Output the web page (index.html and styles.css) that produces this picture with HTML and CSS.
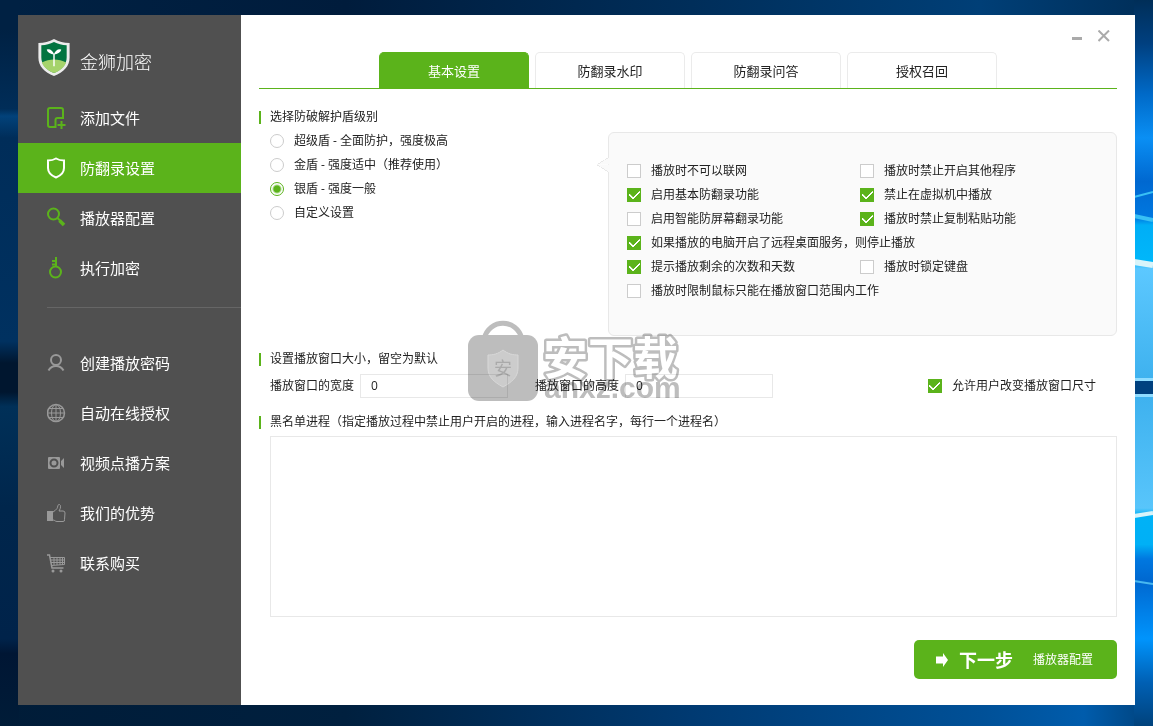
FILE: index.html
```html
<!DOCTYPE html>
<html lang="zh-CN">
<head>
<meta charset="utf-8">
<title>金狮加密</title>
<link rel="stylesheet" href="styles.css">
</head>
<body>
<div class="desktop">
  <svg class="wallpaper" viewBox="0 0 1153 726" preserveAspectRatio="none" aria-hidden="true">
    <defs>
      <linearGradient id="top"><stop offset="0" stop-color="#002143"/><stop offset=".3" stop-color="#001c3c"/><stop offset=".6" stop-color="#002e5a"/><stop offset=".85" stop-color="#003f77"/><stop offset="1" stop-color="#002e58"/></linearGradient>
      <linearGradient id="bottom"><stop offset="0" stop-color="#001c38"/><stop offset=".3" stop-color="#00203f"/><stop offset=".6" stop-color="#003a72"/><stop offset=".85" stop-color="#005097"/><stop offset=".94" stop-color="#005cac"/><stop offset="1" stop-color="#00427c"/></linearGradient>
      <linearGradient id="left" x2="0" y2="1"><stop offset="0" stop-color="#002143"/><stop offset=".04" stop-color="#002143"/><stop offset=".15" stop-color="#002d58"/><stop offset=".16" stop-color="#02427a"/><stop offset=".19" stop-color="#002d59"/><stop offset=".47" stop-color="#003160"/><stop offset=".5" stop-color="#00162f"/><stop offset=".54" stop-color="#00162f"/><stop offset=".56" stop-color="#003058"/><stop offset=".7" stop-color="#00264c"/><stop offset=".88" stop-color="#00234a"/><stop offset=".9" stop-color="#001634"/><stop offset="1" stop-color="#001c38"/></linearGradient>
      <linearGradient id="right" x2="0" y2="1"><stop offset="0" stop-color="#002e58"/><stop offset=".06" stop-color="#004080"/><stop offset=".13" stop-color="#006ac8"/><stop offset=".19" stop-color="#0a8ff4"/><stop offset=".25" stop-color="#0068d0"/><stop offset=".3" stop-color="#0078e0"/><stop offset=".31" stop-color="#00aef6"/><stop offset=".36" stop-color="#00b7fa"/><stop offset=".37" stop-color="#5cc8ff"/><stop offset=".52" stop-color="#3fb2ef"/><stop offset=".55" stop-color="#3fb2ef"/><stop offset=".7" stop-color="#58c5fb"/><stop offset=".71" stop-color="#00b2f6"/><stop offset=".75" stop-color="#00b0f6"/><stop offset=".77" stop-color="#0078e0"/><stop offset=".8" stop-color="#0068d0"/><stop offset=".88" stop-color="#0094fc"/><stop offset=".94" stop-color="#0060b4"/><stop offset="1" stop-color="#00427c"/></linearGradient>
    </defs>
    <rect width="1153" height="16" fill="url(#top)"/>
    <rect y="704" width="1153" height="22" fill="url(#bottom)"/>
    <rect width="19" height="726" fill="url(#left)"/>
    <rect x="1134" width="19" height="726" fill="url(#right)"/>
    <path d="M1134 197L1153 192" stroke="#38c0f5" stroke-width="2"/>
    <path d="M1134 216L1153 220" stroke="#38c0f5" stroke-width="4"/>
    <path d="M1134 262L1153 265" stroke="#d8f4fa" stroke-width="6"/>
    <rect x="1134" y="378" width="19" height="19" fill="#8fdcff"/>
    <rect x="1134" y="381" width="19" height="13" fill="#00417f"/>
    <path d="M1134 516L1153 513" stroke="#d8f4fa" stroke-width="4"/>
    <path d="M1134 581L1153 584" stroke="#48b8f0" stroke-width="2"/>
  </svg>

  <div class="window">
    <aside class="sidebar">
      <header class="brand">
        <svg class="brand-logo" viewBox="0 0 34 40" aria-hidden="true">
          <path d="M17 1C12 4 7 5 1 5V20C1 29 7 35 17 39C27 35 33 29 33 20V5C27 5 22 4 17 1Z" fill="#ececec"/>
          <path d="M17 4C13 6 9 7 4 7.500V20C4 27 9 32.500 17 36C25 32.500 30 27 30 20V7.500C25 7 21 6 17 4Z" fill="#027440"/>
          <path d="M4.500 25C12 21 22 21 29.500 25C27.500 30 23 33.500 17 36C11 33.500 6.500 30 4.500 25Z" fill="#a5d36b"/>
          <path d="M17 29V16" stroke="#fff" stroke-width="1.500"/>
          <path d="M17 17C16 12.500 12 10.500 9.500 12C10.500 15 13.500 16.500 17 17C20.500 16.500 23.500 15 24.500 12C22 10.500 18 12.500 17 17Z" fill="#fff"/>
        </svg>
        <h1 class="brand-name">金狮加密</h1>
      </header>
      <nav class="menu">
        <a class="menu-item" href="#"><svg class="menu-icon accent" viewBox="0 0 20 22"><path d="M7 20H3Q1 20 1 18V3Q1 1 3 1H14Q16 1 16 3V11H10.500Q8.500 11 8.500 13V20H5M14.500 14V22M10.500 18H18.500"/></svg>添加文件</a>
        <a class="menu-item active" href="#" aria-current="page"><svg class="menu-icon" viewBox="0 0 20 22"><path d="M9 1.500C6.500 3 4 3.500 1 3.500V11C1 15.500 4 18.500 9 20.500C14 18.500 17 15.500 17 11V3.500C14 3.500 11.500 3 9 1.500Z"/></svg>防翻录设置</a>
        <a class="menu-item" href="#"><svg class="menu-icon accent" viewBox="0 0 20 22"><circle cx="6.500" cy="7" r="5.500"/><path d="M10.500 11L13 13.500"/><path d="M12.500 13.500L17 18" stroke-width="3.500"/></svg>播放器配置</a>
        <a class="menu-item" href="#"><svg class="menu-icon accent" viewBox="0 0 20 22"><circle cx="8.500" cy="15" r="5.500"/><path d="M9 10V0M9 4H5M9 7.500H5"/></svg>执行加密</a>
      </nav>
      <hr class="divider">
      <nav class="menu">
        <a class="menu-item" href="#"><svg class="menu-icon muted" viewBox="0 0 20 22"><circle cx="9" cy="8" r="5"/><path d="M1.500 18.500C3.500 15 6 14 9 14C12 14 14.500 15 16.500 18.500"/></svg>创建播放密码</a>
        <a class="menu-item" href="#"><svg class="menu-icon muted thin" viewBox="0 0 20 22"><circle cx="9" cy="11" r="8.500" stroke-width="1.500"/><ellipse cx="9" cy="11" rx="4.500" ry="8.500"/><path d="M9 2V20M.500 11H17.500M2 6.500H16M2 15.500H16"/></svg>自动在线授权</a>
        <a class="menu-item" href="#"><svg class="menu-icon muted" viewBox="0 0 20 22"><path d="M2 5H12Q13 5 13 6V16Q13 17 12 17H2Q1 17 1 16V6Q1 5 2 5ZM14 9L17 6V16L14 13Z" fill="#999" stroke="none"/><circle cx="7" cy="11" r="3.500" stroke="#505050"/></svg>视频点播方案</a>
        <a class="menu-item" href="#"><svg class="menu-icon muted thin" viewBox="0 0 20 22"><path d="M0 9H6V19H0Z" fill="#999" stroke="none"/><path d="M6 18C8 18 8 19.500 10 19.500H16Q18 19.500 17.500 17.500L18 11Q18 9 16 9H12C14 6 14 3 12.500 2.500C10.500 2 11 5 10 6.500C9 8 7.500 9 6 10"/></svg>我们的优势</a>
        <a class="menu-item" href="#"><svg class="menu-icon muted thin" viewBox="0 0 20 22"><path d="M0 3H2.500L5 16H16.500" stroke-width="1.500"/><path d="M3 5.500H17.500V12.500L4.500 13.500M3.500 8H17M4 10.500H17M7 5V13M10 5V13M13 5V13M15.500 5V13"/><circle cx="6" cy="19" r="1.500" fill="#999" stroke="none"/><circle cx="14" cy="19" r="1.500" fill="#999" stroke="none"/></svg>联系购买</a>
      </nav>
    </aside>

    <main class="main">
      <div class="titlebar">
        <button class="window-btn" type="button" aria-label="最小化"><svg viewBox="0 0 12 12" width="12" height="12"><path d="M1 8.500H11" stroke="#aaa" stroke-width="3"/></svg></button>
        <button class="window-btn" type="button" aria-label="关闭"><svg viewBox="0 0 12 12" width="12" height="12"><path d="M.500 .500L11 11M11 .500L.500 11" stroke="#aaa" stroke-width="2"/></svg></button>
      </div>
      <div class="tabs" role="tablist">
        <button class="tab selected" type="button" role="tab" aria-selected="true">基本设置</button>
        <button class="tab" type="button" role="tab" aria-selected="false">防翻录水印</button>
        <button class="tab" type="button" role="tab" aria-selected="false">防翻录问答</button>
        <button class="tab" type="button" role="tab" aria-selected="false">授权召回</button>
      </div>

      <form class="form">
        <div class="protection">
          <div class="levels" role="radiogroup" aria-labelledby="level-title">
            <h2 class="section-title" id="level-title">选择防破解护盾级别</h2>
            <label class="choice"><input class="radio" type="radio" name="level">超级盾 - 全面防护，强度极高</label>
            <label class="choice"><input class="radio" type="radio" name="level">金盾 - 强度适中（推荐使用）</label>
            <label class="choice"><input class="radio" type="radio" name="level" checked>银盾 - 强度一般</label>
            <label class="choice"><input class="radio" type="radio" name="level">自定义设置</label>
          </div>
          <div class="panel">
            <label class="choice"><input class="check" type="checkbox">播放时不可以联网</label>
            <label class="choice"><input class="check" type="checkbox">播放时禁止开启其他程序</label>
            <label class="choice"><input class="check" type="checkbox" checked>启用基本防翻录功能</label>
            <label class="choice"><input class="check" type="checkbox" checked>禁止在虚拟机中播放</label>
            <label class="choice"><input class="check" type="checkbox">启用智能防屏幕翻录功能</label>
            <label class="choice"><input class="check" type="checkbox" checked>播放时禁止复制粘贴功能</label>
            <label class="choice wide"><input class="check" type="checkbox" checked>如果播放的电脑开启了远程桌面服务，则停止播放</label>
            <label class="choice"><input class="check" type="checkbox" checked>提示播放剩余的次数和天数</label>
            <label class="choice"><input class="check" type="checkbox">播放时锁定键盘</label>
            <label class="choice wide"><input class="check" type="checkbox">播放时限制鼠标只能在播放窗口范围内工作</label>
          </div>
        </div>

        <section class="size">
          <h2 class="section-title">设置播放窗口大小，留空为默认</h2>
          <div class="size-row">
            <label class="field">播放窗口的宽度<input class="text-box" type="text" value="0"></label>
            <label class="field">播放窗口的高度<input class="text-box" type="text" value="0"></label>
            <label class="choice resize"><input class="check" type="checkbox" checked>允许用户改变播放窗口尺寸</label>
          </div>
          <svg class="watermark" viewBox="0 0 220 88" width="220" height="88" aria-hidden="true">
            <path d="M17 19C22-2 50-2 55 19" fill="none" stroke="#bdbdbd" stroke-width="5"/>
            <rect x="1" y="15" width="70" height="66" rx="11" fill="#bdbdbd"/>
            <path d="M36 30C31 34 26 35 21 35V48C21 57 27 62 36 67C45 62 51 57 51 48V35C46 35 41 34 36 30Z" fill="#ccc" stroke="#d8d8d8"/>
            <text class="mark-badge" x="27" y="55">安</text>
            <text class="mark-title" x="76" y="55">安下载</text>
            <text class="mark-url" x="77" y="78">anxz.com</text>
          </svg>
        </section>

        <section class="blacklist">
          <h2 class="section-title"><label for="processes">黑名单进程（指定播放过程中禁止用户开启的进程，输入进程名字，每行一个进程名）</label></h2>
          <textarea class="processes" id="processes"></textarea>
        </section>

        <button class="next" type="button">
          <svg viewBox="0 0 12 14" width="12" height="14" aria-hidden="true"><path d="M0 3.500H7V0L12 7L7 14V10.500H0Z" fill="#fff"/></svg>
          <strong class="next-title">下一步</strong>
          <span>播放器配置</span>
        </button>
      </form>
    </main>
  </div>
</div>
</body>
</html>
```
FILE: styles.css
```css
* { box-sizing: border-box; }

body {
  margin: 0;
  font: 12px/24px "Open Sans", "Noto Sans CJK SC", sans-serif;
  color: #222;
}

button, input, textarea { font: inherit; color: inherit; margin: 0; }

.desktop {
  position: relative;
  display: flex;
  min-height: 100vh;
  padding: 15px 18px 21px;
  background: #00264c;
}

.wallpaper {
  position: absolute;
  inset: 0;
  width: 100%;
  height: 100%;
}

.window {
  position: relative;
  flex: 1;
  display: flex;
  background: #fff;
}

/* Sidebar */
.sidebar {
  flex: none;
  width: 223px;
  background: #505050;
  color: #fff;
}

.brand {
  display: flex;
  align-items: center;
  gap: 9px;
  height: 78px;
  padding: 7px 0 0 19px;
}

.brand-logo { width: 34px; height: 39px; }

.brand-name {
  margin: 0;
  padding-top: 8px;
  font-size: 18px;
  font-weight: 300;
}

.menu-item {
  display: flex;
  align-items: center;
  gap: 13px;
  height: 50px;
  padding-left: 29px;
  font-size: 15px;
  color: #fff;
  text-decoration: none;
}

.menu-item.active { background: #5bb31b; }

.menu-icon {
  flex: none;
  width: 20px;
  height: 22px;
  fill: none;
  stroke: #fff;
  stroke-width: 2;
}

.accent { stroke: #5bb31b; }
.muted { stroke: #999; }
.thin { stroke-width: 1; }

.divider {
  height: 1px;
  margin: 14px 0 30px 29px;
  border: 0;
  background: #666;
}

/* Main area */
.main {
  flex: 1;
  min-width: 0;
  display: flex;
  flex-direction: column;
  padding: 0 18px 26px;
}

.titlebar {
  display: flex;
  justify-content: flex-end;
  gap: 15px;
  height: 37px;
  padding: 15px 7px 0 0;
}

.window-btn {
  width: 12px;
  height: 12px;
  padding: 0;
  border: 0;
  background: none;
}

.window-btn svg { display: block; }

.tabs {
  display: flex;
  justify-content: center;
  gap: 6px;
  border-bottom: 1px solid #5bb31b;
}

.tab {
  width: 150px;
  height: 36px;
  padding: 0;
  border: 1px solid #ebebeb;
  border-bottom: 0;
  border-radius: 5px 5px 0 0;
  background: #fff;
  font-size: 13px;
}

.tab.selected {
  border-color: #5bb31b;
  background: #5bb31b;
  color: #fff;
}

.form {
  flex: 1;
  display: flex;
  flex-direction: column;
  padding-top: 16px;
}

.protection {
  display: flex;
  justify-content: space-between;
}

.section-title {
  display: flex;
  align-items: center;
  gap: 9px;
  margin: 0;
  font-size: 12px;
  font-weight: 400;
}

.section-title::before {
  content: "";
  width: 2px;
  height: 13px;
  background: #5bb31b;
}

.choice {
  display: flex;
  align-items: center;
  gap: 10px;
  height: 24px;
  white-space: nowrap;
}

.levels .choice { padding-left: 11px; }

.radio, .check {
  appearance: none;
  flex: none;
  width: 14px;
  height: 14px;
  border: 1px solid #ccc;
  background: #fff;
}

.radio { border-radius: 50%; }

.radio:checked {
  border-color: #5bb31b;
  background: radial-gradient(circle, #5bb31b 3px, #fff 5px);
}

.check:checked {
  border-color: #5bb31b;
  background: #5bb31b;
  display: grid;
  place-items: center;
}

.check:checked::before {
  content: "";
  width: 9px;
  height: 5px;
  margin-bottom: 3px;
  border: solid #fff;
  border-width: 0 0 2px 2px;
  border-radius: 1px;
  transform: rotate(-45deg);
}

.panel {
  position: relative;
  display: grid;
  grid-template-columns: 233px 1fr;
  width: 509px;
  margin-top: 27px;
  padding: 26px 18px 32px;
  border: 1px solid #e8e8e8;
  border-radius: 6px;
  background: #fafafa;
}

/* Pointer toward the level list */
.panel::before {
  content: "";
  position: absolute;
  left: -12px;
  top: 24px;
  width: 12px;
  height: 15px;
  background: linear-gradient(to bottom right, transparent 48%, #e8e8e8 48% 54%, #fafafa 54%) top / 100% 50% no-repeat,
    linear-gradient(to top right, transparent 48%, #e8e8e8 48% 54%, #fafafa 54%) bottom / 100% 50% no-repeat;
}

.wide { grid-column: 1 / -1; }

/* Window size */
.size {
  position: relative;
  margin-top: 11px;
}

.size-row {
  display: flex;
  align-items: center;
  gap: 27px;
  margin-top: 3px;
  padding: 0 21px 0 11px;
}

.field {
  display: flex;
  gap: 6px;
  white-space: nowrap;
}

.text-box {
  width: 148px;
  height: 24px;
  padding: 0 10px;
  border: 1px solid #e8e8e8;
  background: #fff;
}

.resize { margin-left: auto; }

.watermark {
  position: absolute;
  left: 208px;
  top: -27px;
  mix-blend-mode: multiply;
  pointer-events: none;
  font-family: "Noto Sans CJK SC", sans-serif;
  font-weight: 700;
}

.mark-badge { font-size: 18px; font-weight: 400; fill: #aaa; }

.mark-title {
  font-size: 45px;
  fill: #fff;
  stroke: #bdbdbd;
  stroke-width: 5;
  stroke-linejoin: round;
  paint-order: stroke;
}

.mark-url { font-family: "Liberation Sans", sans-serif; font-size: 30px; fill: #bdbdbd; }

/* Process blacklist */
.blacklist {
  flex: 1;
  display: flex;
  flex-direction: column;
  margin-top: 12px;
}

.processes {
  flex: 1;
  margin: 2px 0 0 11px;
  padding: 4px 8px;
  border: 1px solid #e8e8e8;
  background: #fff;
  resize: none;
}

.next {
  align-self: flex-end;
  display: flex;
  align-items: center;
  height: 39px;
  margin-top: 23px;
  padding: 0 24px 0 22px;
  border: 0;
  border-radius: 5px;
  background: #5bb31b;
  color: #fff;
}

.next-title {
  margin: 0 20px 0 11px;
  font-size: 18px;
  font-weight: 700;
}
```
